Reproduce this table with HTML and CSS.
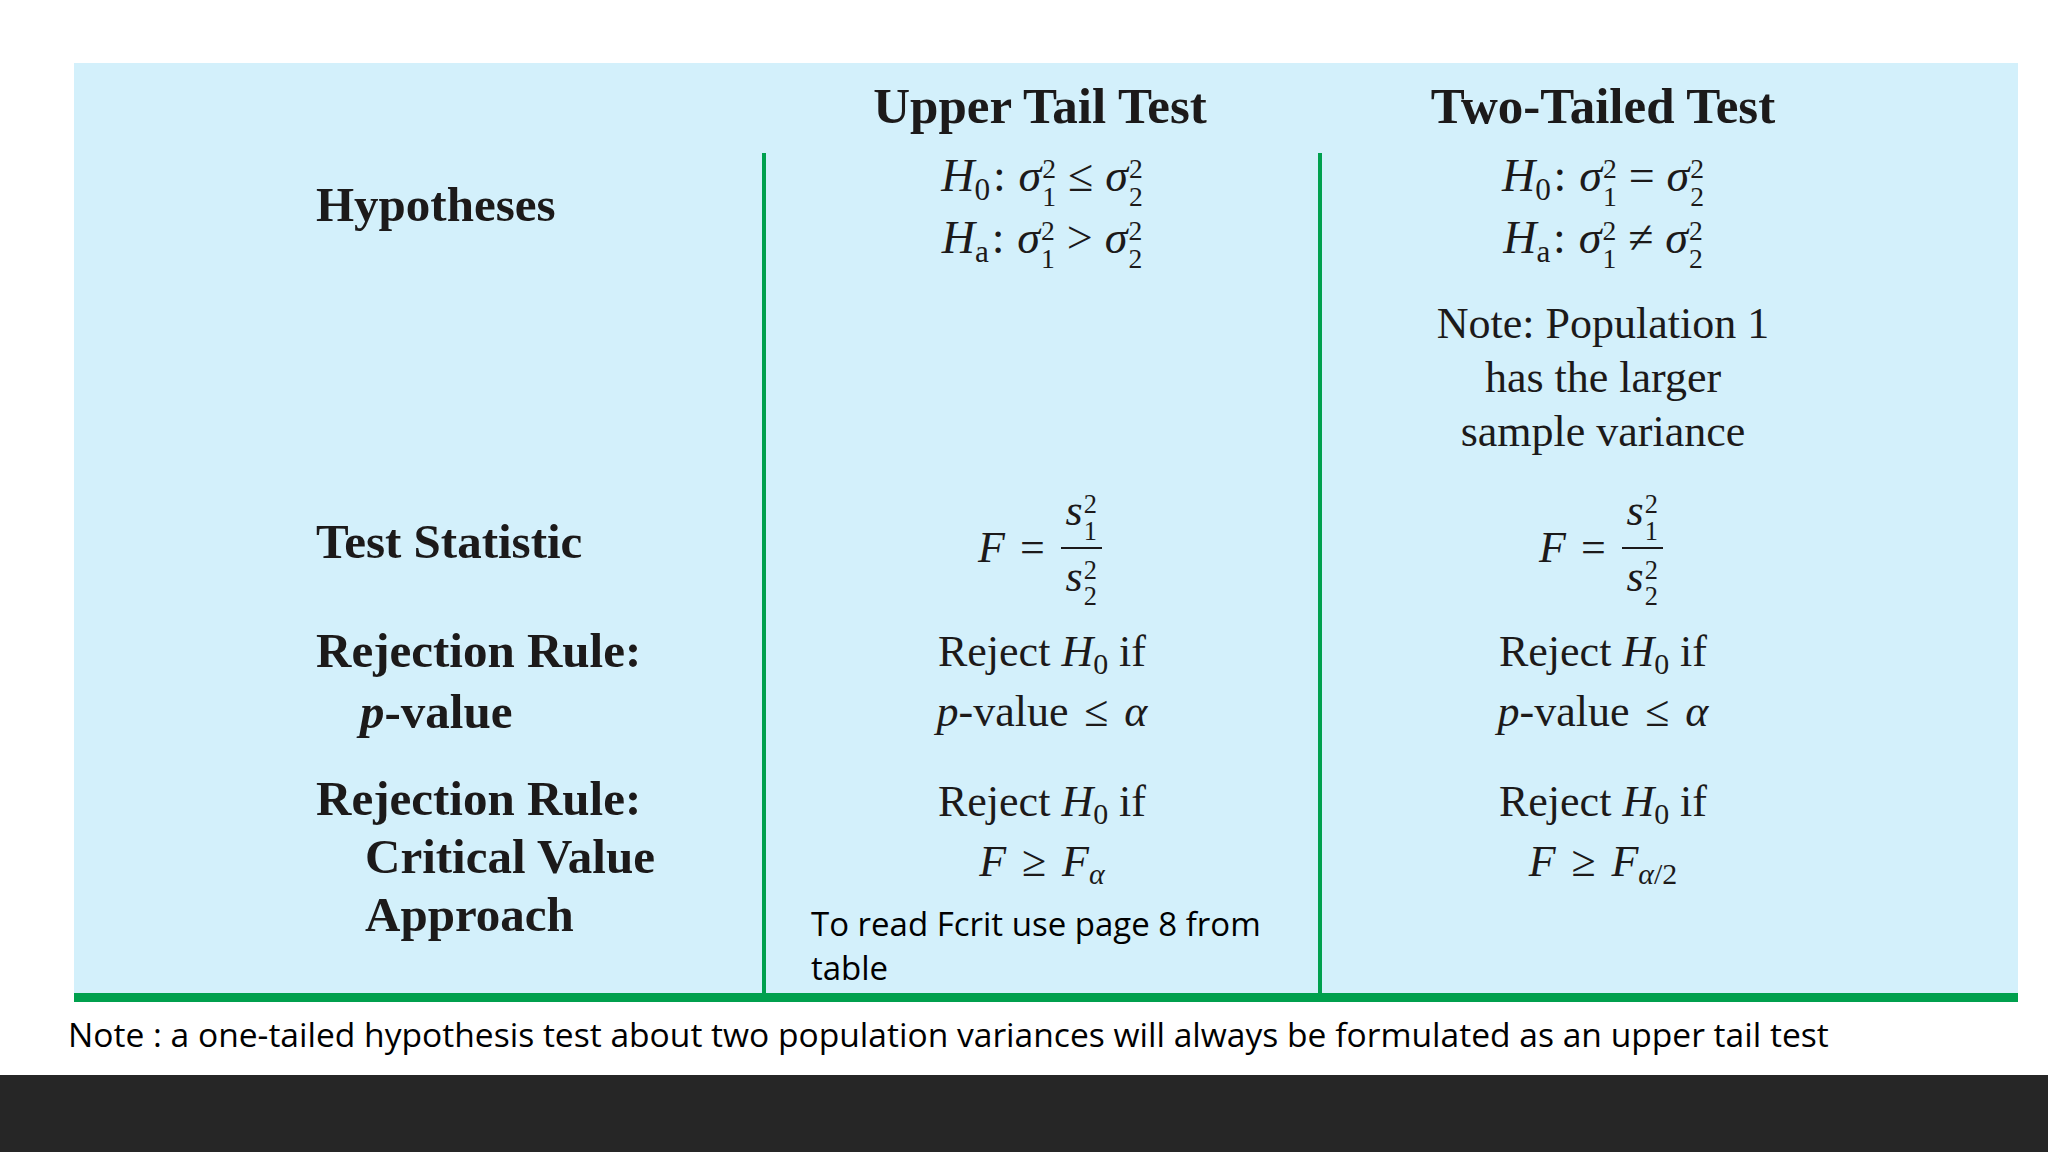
FILE: index.html
```html
<!DOCTYPE html>
<html>
<head>
<meta charset="utf-8">
<link rel="stylesheet" href="styles.css">
</head>
<body>
<div class="slide">
  <div class="table">
    <div class="row head">
      <div class="c1"></div>
      <div class="c2 hd">Upper Tail Test</div>
      <div class="c3 hd">Two-Tailed Test</div>
    </div>

    <div class="row r-hyp">
      <div class="c1"><div class="lbl lbl-hyp">Hypotheses</div></div>
      <div class="c2 ln">
        <div class="m hyp">
          <div class="hl"><i>H</i><sub>0</sub><span class="col">:</span><i>σ</i><span class="ss"><span>2</span><span>1</span></span><span class="op">≤</span><i>σ</i><span class="ss"><span>2</span><span>2</span></span></div>
          <div class="hl"><i>H</i><sub>a</sub><span class="col">:</span><i>σ</i><span class="ss"><span>2</span><span>1</span></span><span class="op">&gt;</span><i>σ</i><span class="ss"><span>2</span><span>2</span></span></div>
        </div>
      </div>
      <div class="c3 ln">
        <div class="m hyp">
          <div class="hl"><i>H</i><sub>0</sub><span class="col">:</span><i>σ</i><span class="ss"><span>2</span><span>1</span></span><span class="op">=</span><i>σ</i><span class="ss"><span>2</span><span>2</span></span></div>
          <div class="hl"><i>H</i><sub>a</sub><span class="col">:</span><i>σ</i><span class="ss"><span>2</span><span>1</span></span><span class="op">≠</span><i>σ</i><span class="ss"><span>2</span><span>2</span></span></div>
        </div>
      </div>
    </div>

    <div class="row r-note">
      <div class="c1"></div>
      <div class="c2 ln"></div>
      <div class="c3 ln">
        <div class="m pnote">Note: Population 1<br>has the larger<br>sample variance</div>
      </div>
    </div>

    <div class="row r-stat">
      <div class="c1"><div class="lbl lbl-stat">Test Statistic</div></div>
      <div class="c2 ln">
        <div class="m fwrap"><i>F</i><span class="op eq">=</span><span class="frac"><span class="num"><i>s</i><span class="ss"><span>2</span><span>1</span></span></span><span class="den"><i>s</i><span class="ss"><span>2</span><span>2</span></span></span></span></div>
      </div>
      <div class="c3 ln">
        <div class="m fwrap"><i>F</i><span class="op eq">=</span><span class="frac"><span class="num"><i>s</i><span class="ss"><span>2</span><span>1</span></span></span><span class="den"><i>s</i><span class="ss"><span>2</span><span>2</span></span></span></span></div>
      </div>
    </div>

    <div class="row r-p">
      <div class="c1"><div class="lbl lbl-p">Rejection Rule:<br><span class="ind1"><i>p</i>-value</span></div></div>
      <div class="c2 ln">
        <div class="m rr">Reject <i>H</i><sub>0</sub> if<br><i>p</i>-value<span class="op op2">≤</span><i>α</i></div>
      </div>
      <div class="c3 ln">
        <div class="m rr">Reject <i>H</i><sub>0</sub> if<br><i>p</i>-value<span class="op op2">≤</span><i>α</i></div>
      </div>
    </div>

    <div class="row r-crit">
      <div class="c1"><div class="lbl lbl-crit">Rejection Rule:<br><span class="ind2">Critical Value</span><br><span class="ind2">Approach</span></div></div>
      <div class="c2 ln">
        <div class="m rr">Reject <i>H</i><sub>0</sub> if<br><i>F</i><span class="op op2">≥</span><i>F</i><sub><i>α</i></sub></div>
        <div class="fcrit">To read Fcrit use page 8 from table</div>
      </div>
      <div class="c3 ln">
        <div class="m rr">Reject <i>H</i><sub>0</sub> if<br><i>F</i><span class="op op2">≥</span><i>F</i><sub><i>α</i>/2</sub></div>
      </div>
    </div>
  </div>
  <p class="note">Note : a one-tailed hypothesis test about two population variances will always be formulated as an upper tail test</p>
  <div class="footer"></div>
</div>
</body>
</html>
```
FILE: styles.css
```css
html, body {
  margin: 0;
  padding: 0;
  background: #ffffff;
}
.slide {
  width: 2048px;
  height: 1152px;
  overflow: hidden;
  padding-top: 63px;
  box-sizing: border-box;
  background: #ffffff;
  display: flex;
  flex-direction: column;
}
.table {
  margin-left: 74px;
  width: 1944px;
  background: #d3f0fb;
  border-bottom: 9px solid #00a04e;
  color: #1c1a1a;
  font-family: "Liberation Serif", "Times New Roman", serif;
}
.row {
  display: grid;
  grid-template-columns: 688px 556px 566px 1fr;
}
.ln {
  border-left: 4px solid #00a04e;
}
.c2, .c3 {
  text-align: center;
}
.head { height: 90px; }
.hd {
  font-weight: bold;
  font-size: 51px;
  line-height: 86px;
}
.head .c3 { padding-left: 4px; }
.r-hyp { height: 118px; }
.r-note { height: 189px; }
.r-stat { height: 150px; }
.r-p { height: 150px; }
.r-crit { height: 233px; }

.lbl {
  font-weight: bold;
  font-size: 49px;
  padding-left: 242px;
  white-space: nowrap;
}
.lbl-hyp { line-height: 63px; padding-top: 20px; }
.lbl-stat { line-height: 63px; padding-top: 50px; }
.lbl-p { line-height: 61px; padding-top: 10px; }
.lbl-crit { line-height: 58px; padding-top: 10px; }
.ind1 { padding-left: 44px; }
.ind2 { padding-left: 49px; }

.m {
  font-size: 44px;
  white-space: nowrap;
}
.hyp {
  font-size: 46px;
  line-height: 62px;
  margin-top: -8px;
}
.hl {
  height: 62px;
  overflow: visible;
}
.col {
  margin-right: 0.28em;
  margin-left: 0.06em;
}
.op {
  margin: 0 0.26em;
}
.op2 {
  margin: 0 0.36em;
}
.pnote {
  line-height: 54px;
  padding-top: 26px;
}
.rr {
  line-height: 60px;
  padding-top: 12px;
}
sub {
  font-size: 0.68em;
  vertical-align: -0.28em;
  line-height: 0;
}
.ss {
  display: inline-flex;
  flex-direction: column;
  font-size: 0.6em;
  line-height: 1.02;
  vertical-align: 0.46em;
  margin-left: 1px;
}
.fwrap {
  display: flex;
  justify-content: center;
  align-items: center;
  padding-top: 25px;
  padding-right: 4px;
}
.eq {
  margin: 0 0.36em 0 0.34em;
}
.frac {
  display: inline-flex;
  flex-direction: column;
  align-items: center;
  line-height: 52px;
}
.num {
  padding: 0 5px 2px 5px;
  border-bottom: 2px solid #1c1a1a;
}
.den {
  padding: 2px 5px 0 5px;
}
.fcrit {
  font-family: "Open Sans", "Liberation Sans", sans-serif;
  font-size: 33px;
  line-height: 44px;
  text-align: left;
  padding-left: 45px;
  padding-right: 30px;
  margin-top: 10px;
  color: #000000;
}
.note {
  margin: 0;
  height: 73px;
  line-height: 64px;
  padding-left: 68px;
  font-family: "Open Sans", "Liberation Sans", sans-serif;
  font-size: 33.6px;
  color: #000000;
  white-space: nowrap;
}
.footer {
  flex: 1;
  background: #262626;
}
```
